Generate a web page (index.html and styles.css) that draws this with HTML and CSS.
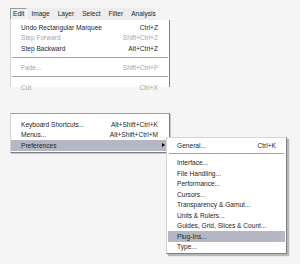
FILE: index.html
```html
<!DOCTYPE html>
<html lang="en">
<head>
    <meta charset="UTF-8">
    <title>Edit menu</title>
    <link rel="stylesheet" href="styles.css">
</head>
<body>
    <div class="page">
        <div class="menubar">
            <span class="top active">Edit</span>
            <span class="top">Image</span>
            <span class="top">Layer</span>
            <span class="top">Select</span>
            <span class="top">Filter</span>
            <span class="top">Analysis</span>
        </div>
        <div class="menu first">
            <div class="item"><span>Undo Rectangular Marquee</span><span>Ctrl+Z</span></div>
            <div class="item off"><span>Step Forward</span><span>Shift+Ctrl+Z</span></div>
            <div class="item"><span>Step Backward</span><span>Alt+Ctrl+Z</span></div>
            <div class="sep"></div>
            <div class="item off"><span>Fade...</span><span>Shift+Ctrl+F</span></div>
            <div class="sep"></div>
            <div class="item off"><span>Cut</span><span>Ctrl+X</span></div>
        </div>

        <div class="menu second">
            <div class="item"><span>Keyboard Shortcuts...</span><span>Alt+Shift+Ctrl+K</span></div>
            <div class="item"><span>Menus...</span><span>Alt+Shift+Ctrl+M</span></div>
            <div class="item hot has-sub">
                <span>Preferences</span><span class="arrow"></span>
                <div class="menu sub">
                    <div class="item"><span>General...</span><span>Ctrl+K</span></div>
                    <div class="sep"></div>
                    <div class="item"><span>Interface...</span></div>
                    <div class="item"><span>File Handling...</span></div>
                    <div class="item"><span>Performance...</span></div>
                    <div class="item"><span>Cursors...</span></div>
                    <div class="item"><span>Transparency &amp; Gamut...</span></div>
                    <div class="item"><span>Units &amp; Rulers...</span></div>
                    <div class="item"><span>Guides, Grid, Slices &amp; Count...</span></div>
                    <div class="item hot"><span>Plug-Ins...</span></div>
                    <div class="item"><span>Type...</span></div>
                </div>
            </div>
        </div>
    </div>
</body>
</html>
```

FILE: styles.css
```css
body {
    margin: 0;
    background: #f5f5f5;
    font-family: "Liberation Sans", Arial, sans-serif;
    font-size: 6.6px;
    color: #262626;
}

.page {
    height: 264px;
    padding: 8px 0 0 10px;
    box-sizing: border-box;
    overflow: hidden;
}

.menubar {
    display: flex;
    width: 145px;
    height: 12px;
    background: #ededed;
    align-items: center;
}

.top {
    padding: 0 4px 0 3px;
    margin-right: 1px;
    height: 12px;
    line-height: 12px;
    box-sizing: border-box;
}

.top.active {
    border: 1px solid;
    border-color: #9a9a9a #ffffff #ffffff #9a9a9a;
    line-height: 10px;
    padding: 0 2px;
}

.menu {
    width: 160px;
    background: #fff;
    border-left: 1px solid #d4d4d4;
    border-right: 1px solid #7f7f7f;
    box-sizing: border-box;
}

.first {
    height: 67px;
    padding-top: 2px;
}

.second {
    margin-top: 26px;
    border-top: 1px solid #9c9c9c;
    border-bottom: 1px solid #7f7f7f;
    padding: 5px 0 1px;
    box-shadow: 1px 1px 0 #c8c8c8;
}

.item {
    display: flex;
    justify-content: space-between;
    align-items: center;
    height: 10.5px;
    padding: 0 11px 0 10px;
    white-space: nowrap;
}

.off {
    color: #a6a6a6;
}

.hot {
    background: #b5b7c4;
}

.sep {
    height: 1px;
    margin: 2px 1px 3px;
    background: #a0a0a0;
    border-bottom: 1px solid #fff;
}

.first .sep {
    margin: 3px 1px 4px;
}

.has-sub {
    position: relative;
    padding-right: 4px;
}

.arrow {
    width: 0;
    height: 0;
    border-top: 2.5px solid transparent;
    border-bottom: 2.5px solid transparent;
    border-left: 3px solid #000;
}

.sub {
    position: absolute;
    left: 155px;
    top: -3px;
    width: 121px;
    border-top: 1px solid #d4d4d4;
    border-bottom: 1px solid #7f7f7f;
    padding: 2px 1px 1px 1px;
    box-shadow: 2px 2px 1px #b8b8b8;
}

.sub .item {
    padding: 0 9px 0 9px;
}
```
